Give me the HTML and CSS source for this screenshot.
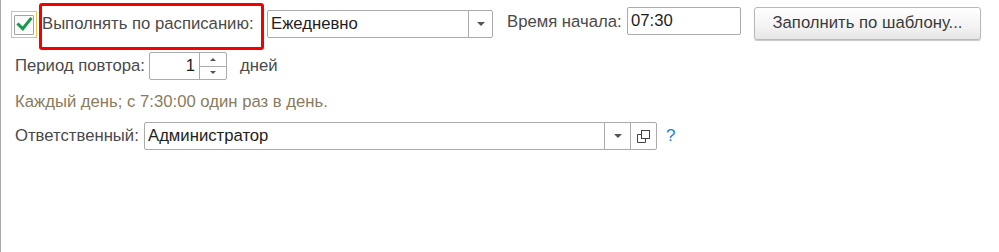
FILE: index.html
```html
<!DOCTYPE html>
<html lang="ru">
<head>
<meta charset="utf-8">
<title>Расписание</title>
<link rel="stylesheet" href="styles.css">
</head>
<body>
<div class="form">
  <div class="row-top">
    <div class="check-focus">
      <span class="check">
        <svg width="17" height="17" viewBox="0 0 17 17"><path d="M2.5 8.5 L6.8 12.8 L14.5 3" fill="none" stroke="#17994a" stroke-width="3" stroke-linecap="square"/></svg>
      </span>
    </div>
    <div class="annot"><span class="label">Выполнять по расписанию:</span></div>
    <div class="field select">
      <span class="val">Ежедневно</span>
      <span class="btn-cell"><span class="tri-down"></span></span>
    </div>
    <span class="label l-time">Время начала:</span>
    <div class="field time"><span class="val">07:30</span></div>
    <button class="btn">Заполнить по шаблону...</button>
  </div>

  <div class="row row-period">
    <span class="label">Период повтора:</span>
    <div class="field spin">
      <span class="val num">1</span>
      <span class="spin-btns">
        <span class="spin-half"><span class="tri-up sm"></span></span>
        <span class="spin-half lower"><span class="tri-down sm"></span></span>
      </span>
    </div>
    <span class="label days">дней</span>
  </div>

  <div class="desc">Каждый день; с 7:30:00 один раз в день.</div>

  <div class="row row-resp">
    <span class="label">Ответственный:</span>
    <div class="field resp">
      <span class="val">Администратор</span>
      <span class="btn-cell wide"><span class="tri-down"></span></span>
      <span class="btn-cell wide">
        <svg width="13" height="13" viewBox="0 0 13 13"><rect x="4.5" y="0.5" width="8" height="8" fill="none" stroke="#444"/><path d="M4.5 4.5 H0.5 V12.5 H8.5 V8.5" fill="none" stroke="#444"/></svg>
      </span>
    </div>
    <span class="help">?</span>
  </div>
</div>
</body>
</html>
```

FILE: styles.css
```css
html, body {
  margin: 0;
  padding: 0;
  background: #fff;
}

.form {
  height: 252px;
  box-sizing: border-box;
  border-left: 1px solid #a8a8a8;
  font-family: "Liberation Sans", Arial, sans-serif;
  font-size: 16.7px;
  color: #4a4a4a;
}

.label {
  line-height: 20px;
  white-space: nowrap;
}

.row-top {
  display: flex;
  align-items: flex-start;
  padding-top: 3px;
  height: 47px;
}

.check-focus {
  margin: 8px 0 0 10px;
  width: 26px;
  height: 27px;
  box-sizing: border-box;
  border: 1px solid #f1c24a;
  display: flex;
  align-items: center;
  justify-content: center;
}

.check {
  width: 20px;
  height: 20px;
  box-sizing: border-box;
  border: 1px solid #a3a3a3;
  border-radius: 1px;
  background: #fbfbfb;
  display: flex;
  align-items: center;
  justify-content: center;
}

.annot {
  margin-left: 2px;
  width: 225px;
  height: 47px;
  box-sizing: border-box;
  border: 3px solid #f40000;
  border-radius: 3px;
  padding-top: 8px;
}

.field {
  height: 28px;
  box-sizing: border-box;
  border: 1px solid #ababab;
  border-radius: 2px;
  background: #fff;
  color: #1e1e1e;
  display: flex;
  align-items: stretch;
}

.field .val {
  flex: 1;
  padding-left: 3px;
  line-height: 26px;
  white-space: nowrap;
  overflow: hidden;
}

.btn-cell {
  width: 24px;
  box-sizing: border-box;
  border-left: 1px solid #ababab;
  display: flex;
  align-items: center;
  justify-content: center;
}

.btn-cell.wide {
  width: 26px;
}

.tri-down {
  width: 0;
  height: 0;
  border-left: 4px solid transparent;
  border-right: 4px solid transparent;
  border-top: 4px solid #555;
}

.tri-up {
  width: 0;
  height: 0;
  border-left: 4px solid transparent;
  border-right: 4px solid transparent;
  border-bottom: 4px solid #555;
}

.tri-up.sm {
  border-left-width: 3px;
  border-right-width: 3px;
  border-bottom-width: 3px;
}

.tri-down.sm {
  border-left-width: 3px;
  border-right-width: 3px;
  border-top-width: 3px;
}

.select {
  margin: 7px 0 0 3px;
  width: 226px;
}

.l-time {
  margin: 9px 0 0 14px;
  width: 120px;
}

.time {
  margin-top: 4px;
  width: 114px;
}

.btn {
  margin: 4px 0 0 13px;
  width: 227px;
  height: 33px;
  box-sizing: border-box;
  border: 1px solid #b9b9b9;
  border-radius: 3px;
  background: linear-gradient(#ffffff, #f3f3f3 60%, #e6e6e6);
  box-shadow: 0 1px 1px rgba(0, 0, 0, 0.22);
  font-family: inherit;
  font-size: 16.7px;
  color: #3a3a3a;
  padding: 0 0 1px 0;
}

.row {
  display: flex;
  align-items: center;
  padding-left: 14px;
}

.row-period {
  margin-top: 2px;
  height: 28px;
}

.row-period .label:first-child {
  width: 134px;
}

.spin {
  width: 78px;
}

.spin .val.num {
  text-align: right;
  padding-right: 4px;
}

.spin-btns {
  width: 27px;
  box-sizing: border-box;
  border-left: 1px solid #ababab;
  display: flex;
  flex-direction: column;
}

.spin-half {
  flex: 1;
  display: flex;
  align-items: center;
  justify-content: center;
}

.spin-half.lower {
  border-top: 1px solid #ababab;
}

.days {
  margin-left: 13px;
}

.desc {
  margin-top: 12px;
  padding-left: 14px;
  line-height: 20px;
  color: #8a7b5d;
}

.row-resp {
  margin-top: 10px;
  height: 28px;
}

.row-resp .label {
  width: 129px;
}

.resp {
  width: 513px;
}

.help {
  margin-left: 9px;
  color: #1f7fd0;
  font-size: 17px;
}
```
